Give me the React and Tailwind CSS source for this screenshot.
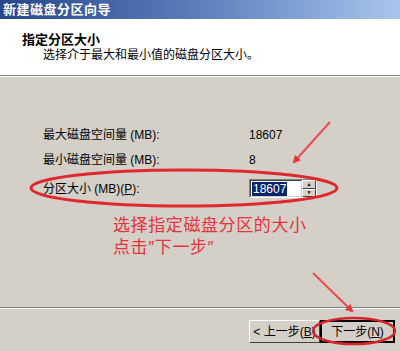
import React from "react";

const FONT = { fontFamily: '"Liberation Sans", "Noto Sans CJK SC", sans-serif' };

function Spinner() {
  return (
    <div className="flex flex-col w-[14px] h-full">
      {["▲", "▼"].map((a) => (
        <div key={a}
          className="flex-1 flex items-center justify-center bg-[#d4d0c8] border border-t-white border-l-white border-r-[#404040] border-b-[#404040] text-[5px] leading-none text-black">
          {a}
        </div>
      ))}
    </div>
  );
}

function Annotations() {
  return (
    <svg className="absolute inset-0 pointer-events-none" width="400" height="351" viewBox="0 0 400 351">
      <defs>
        <marker id="head" markerWidth="8" markerHeight="8" refX="6" refY="4" orient="auto" markerUnits="userSpaceOnUse">
          <path d="M0,0 L8,4 L0,8 z" fill="#e8333c" />
        </marker>
      </defs>
      <ellipse cx="184" cy="188" rx="153" ry="18" fill="none" stroke="#e0262f" strokeWidth="3" />
      <ellipse cx="354" cy="331" rx="41" ry="13" fill="none" stroke="#d6262d" strokeWidth="2.5" />
      <line x1="330" y1="122" x2="294" y2="162" stroke="#ec4a50" strokeWidth="2" markerEnd="url(#head)" />
      <line x1="313" y1="273" x2="352" y2="311" stroke="#ec4a50" strokeWidth="2" markerEnd="url(#head)" />
    </svg>
  );
}

export default function App() {
  return (
    <div className="relative w-[400px] h-[351px] overflow-hidden bg-[#d4d0c8] flex flex-col text-[12px] text-black" style={FONT}>
      {/* title bar */}
      <div className="h-[19px] shrink-0 flex items-center pl-[3px] bg-gradient-to-r from-[#27468c] via-[#5d7fbd] to-[#a9c7ec] text-white font-bold text-[13px] tracking-[0.5px]">
        新建磁盘分区向导
      </div>

      {/* header */}
      <div className="h-[57px] shrink-0 bg-white pt-[13px] pl-[22px] border-b border-[#808080]">
        <div className="font-bold text-[13px] leading-[15px]">指定分区大小</div>
        <div className="pl-[21px] leading-[15px] mt-[1px]">选择介于最大和最小值的磁盘分区大小。</div>
      </div>
      <div className="h-px bg-white shrink-0" />

      {/* body */}
      <div className="flex-1 flex flex-col pl-[43px] pt-[50px]">
        <div className="flex items-center h-[16px]">
          <span className="w-[206px]">最大磁盘空间量 (MB):</span>
          <span className="text-[12px]">18607</span>
        </div>
        <div className="flex items-center h-[16px] mt-[9px]">
          <span className="w-[206px]">最小磁盘空间量 (MB):</span>
          <span className="text-[12px]">8</span>
        </div>
        <div className="flex items-center mt-[11px]">
          <span className="w-[206px]">分区大小 (MB)(<span className="underline">P</span>):</span>
          <div className="w-[68px] h-[19px] flex items-stretch bg-white border border-t-[#808080] border-l-[#808080] border-r-white border-b-white">
            <div className="flex-1 flex items-center pl-[1px] border border-t-[#404040] border-l-[#404040] border-r-[#d4d0c8] border-b-[#d4d0c8]">
              <span className="bg-[#0a246a] text-white px-[1px] leading-[14px]">18607</span>
            </div>
            <Spinner />
          </div>
        </div>

        {/* red note */}
        <div className="ml-[70px] mt-[17px] text-[#e6323b] text-[17px] leading-[22px] tracking-[0.6px]">
          <div>选择指定磁盘分区的大小</div>
          <div>点击″下一步″</div>
        </div>
      </div>

      {/* footer */}
      <div className="shrink-0 border-t border-[#808080]">
        <div className="h-px bg-white" />
        <div className="h-[42px] flex items-start justify-end pt-[11px] pr-[5px]">
          <button className="w-[71px] h-[23px] bg-[#d4d0c8] border border-t-white border-l-white border-r-[#404040] border-b-[#404040] text-[12px] flex items-center justify-center">
            &lt; 上一步(<span className="underline">B</span>)
          </button>
          <button className="w-[75px] h-[23px] bg-[#d4d0c8] border-2 border-black text-[12px] flex items-center justify-center">
            下一步(<span className="underline">N</span>)
          </button>
        </div>
      </div>

      <Annotations />
    </div>
  );
}
